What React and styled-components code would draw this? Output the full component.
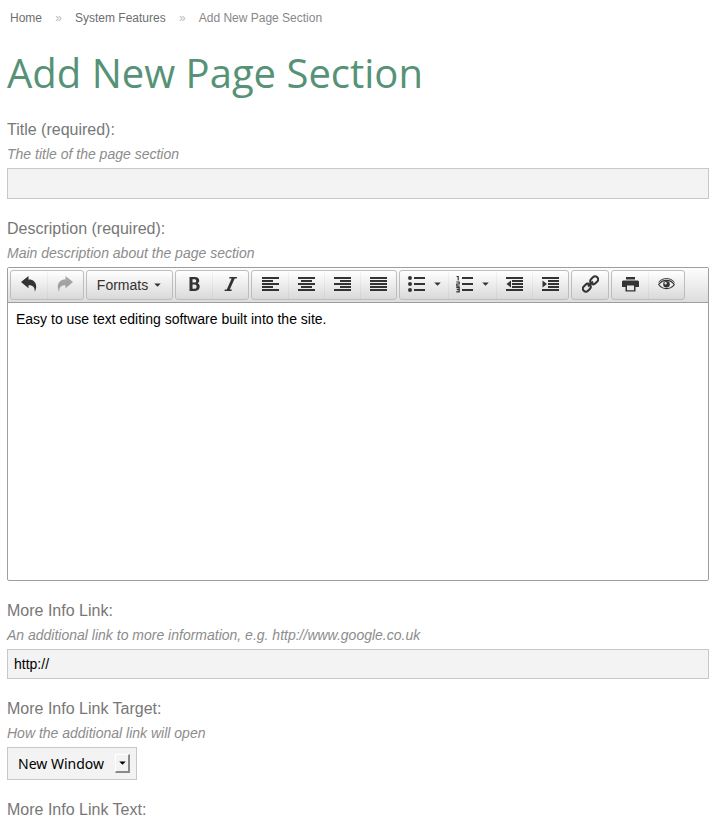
import React from 'react'
import styled, { createGlobalStyle } from 'styled-components'

const GlobalStyle = createGlobalStyle`
  * {
    box-sizing: border-box;
  }
  body {
    margin: 0;
    background: #fff;
    color: #777;
    font-family: "Liberation Sans", Arial, sans-serif;
  }
`;

const Page = styled.main`
  padding: 8px 6px 0 7px;
`;

const Breadcrumb = styled.nav`
  display: flex;
  padding: 0 3px;
  font-size: 12px;
  line-height: 20px;
  color: #888;
`;

const Crumb = styled.a`
  color: #6e6e6e;
  text-decoration: none;
`;

const Divider = styled.span`
  width: 33px;
  text-align: center;
  color: #bbb;
`;

const Heading = styled.h1`
  margin: 15px 0;
  font-family: "Open Sans", "Noto Sans", sans-serif;
  font-size: 40px;
  font-weight: 400;
  line-height: 60px;
  color: #559276;
`;

const Field = styled.div`
  margin-bottom: 18px;
`;

const Label = styled.label`
  display: block;
  font-size: 16px;
  line-height: 24px;
`;

const Hint = styled.p`
  margin: 0 0 1px;
  font-size: 14px;
  font-style: italic;
  line-height: 25px;
  color: #8c8c8c;
`;

const TextInput = styled.input`
  display: block;
  width: 100%;
  height: ${(props) => (props.$tall ? 31 : 30)}px;
  padding: 0 6px;
  border: 1px solid #c8c8c8;
  border-radius: 0;
  background: #f3f3f3;
  color: #000;
  font-family: inherit;
  font-size: 14px;
  outline: none;
`;

const SelectBox = styled.div`
  display: inline-flex;
  align-items: center;
  position: relative;
  vertical-align: top;
  border: 1px solid #c8c8c8;
  background: #f3f3f3;
`;

const Select = styled.select`
  appearance: none;
  width: 128px;
  height: 31px;
  padding: 0 24px 0 10px;
  border: 0;
  background: transparent;
  color: #000;
  font-family: "Noto Sans", "Open Sans", sans-serif;
  font-size: 14px;
  outline: none;
`;

const SelectArrow = styled.span`
  display: flex;
  align-items: center;
  justify-content: center;
  position: absolute;
  right: 6px;
  width: 15px;
  height: 19px;
  border: 1px solid #fff;
  border-right: 2px solid #8a8a8a;
  border-bottom: 2px solid #8a8a8a;
  background: #f3f3f3;
  color: #000;
  pointer-events: none;
`;

const Editor = styled.div`
  border: 1px solid #9e9e9e;
  border-radius: 2px;
  background: #fff;
`;

const Toolbar = styled.div`
  display: flex;
  flex-wrap: wrap;
  gap: 2px;
  padding: 2px;
  border-bottom: 1px solid #9e9e9e;
  background: linear-gradient(#fdfdfd, #dddddd);
`;

const Group = styled.div`
  display: flex;
  border: 1px solid #bdbdbd;
  border-radius: 3px;
  background: linear-gradient(#ffffff, #d9d9d9);
`;

const ToolButton = styled.button`
  display: flex;
  align-items: center;
  justify-content: center;
  gap: ${(props) => (props.$text ? 6 : 9)}px;
  width: ${(props) => props.$width || 36}px;
  height: 28px;
  padding: ${(props) => (props.$text ? '0 2px 0 0' : '0 0 2px')};
  border: 0;
  border-left: 1px solid ${(props) => (props.$first ? 'transparent' : 'rgba(0, 0, 0, 0.04)')};
  background: transparent;
  color: #333;
  font-family: inherit;
  font-size: 14px;
`;

const Glyph = styled.svg`
  display: block;
  flex: none;
  fill: currentColor;
  opacity: ${(props) => (props.$faded ? 0.4 : 1)};
`;

const Body = styled.textarea`
  display: block;
  width: 100%;
  height: 277px;
  padding: 8px;
  border: 0;
  background: transparent;
  color: #000;
  font-family: inherit;
  font-size: 14px;
  line-height: 16px;
  resize: none;
  outline: none;
`;

const icons = {
  undo: <path d="M0 7 7.500 1v3.500c6-.3 10 5 6.200 12.300.3-4.500-1.700-6.500-6.200-6.500v3z" />,
  redo: <path d="M16 7 8.500 1v3.500C2.500 4.200-1.500 9.500 2.300 16.800 2 12.300 4 10.300 8.500 10.300v3z" />,
  bold: <path fillRule="evenodd" d="M3.500 2h5.500c2.700 0 4.200 1.300 4.200 3.500 0 1.400-.7 2.300-1.700 2.800 1.400.5 2.200 1.600 2.200 3.300 0 2.800-1.700 4.400-4.700 4.400H3.500zM6.500 4.200v3.400h1.700c1.300 0 2-.6 2-1.700s-.7-1.700-2-1.700zm0 5.400v4.200h2c1.400 0 2.100-.7 2.100-2.100s-.7-2.100-2.100-2.100z" />,
  italic: <path d="M7.500 2H15l-.3 1.400h-2L7.800 14.600h2L9.500 16H2.500l.3-1.400h2L9.600 3.400H7.200z" />,
  left: <path d="M0 2h17v2H0zM0 5h11v2H0zM0 8h17v2H0zM0 11h11v2H0zM0 14h17v2H0z" />,
  center: <path d="M0 2h17v2H0zM3 5h11v2H3zM0 8h17v2H0zM3 11h11v2H3zM0 14h17v2H0z" />,
  right: <path d="M0 2h17v2H0zM6 5h11v2H6zM0 8h17v2H0zM6 11h11v2H6zM0 14h17v2H0z" />,
  justify: <path d="M0 2h17v2H0zM0 5h17v2H0zM0 8h17v2H0zM0 11h17v2H0zM0 14h17v2H0z" />,
  bullets: <path d="M6 2h11v2H6zM6 8h11v2H6zM6 14h11v2H6zM2 1a2 2 0 1 1 0 4 2 2 0 0 1 0-4zM2 7a2 2 0 1 1 0 4 2 2 0 0 1 0-4zM2 13a2 2 0 1 1 0 4 2 2 0 0 1 0-4z" />,
  numbers: (
    <>
      <path d="M6 2h11v2H6zM6 8h11v2H6zM6 14h11v2H6z" />
      <path fill="none" stroke="currentColor" strokeWidth="1.200" d="M.5 1.500h1.700V5.500M.3 7h2.900v2H.8v2.100h2.900M.3 12.700h2.900v4.100H.3M.8 14.700h2.400" />
    </>
  ),
  outdent: <path d="M0 2h17v2H0zM6 5h11v2H6zM6 8h11v2H6zM6 11h11v2H6zM0 14h17v2H0zM5 5.500v7L.5 9z" />,
  indent: <path d="M0 2h17v2H0zM6 5h11v2H6zM6 8h11v2H6zM6 11h11v2H6zM0 14h17v2H0zM.5 5.500v7L5 9z" />,
  link: (
    <g fill="none" stroke="currentColor" strokeWidth="2" transform="rotate(-45 8.500 9)">
      <rect x="-1" y="6" width="8.500" height="6" rx="3" />
      <rect x="9.500" y="6" width="8.500" height="6" rx="3" />
      <path d="M5 9h7" />
    </g>
  ),
  print: <path fillRule="evenodd" d="M4 2h9v2.500H4zM1 5.500h15l1 1V12h-3.500v4.500h-10V12H0V6.500zM5 10.500v4.700h7v-4.700z" />,
  preview: (
    <>
      <path fill="none" stroke="currentColor" strokeWidth="1.200" d="M.7 9.500C4.500 4 12.500 4 16.300 9.500 12.500 15 4.500 15 .7 9.500z" />
      <path fillRule="evenodd" d="M8.500 6a3.300 3.300 0 1 1 0 6.600 3.300 3.300 0 0 1 0-6.600zM7.600 7a1.200 1.200 0 1 0 0 2.400 1.200 1.200 0 0 0 0-2.400z" />
      <path fill="none" stroke="currentColor" d="M.5 7.300C4.500 2.300 12.500 2.300 16.500 7.300" />
    </>
  ),
};

const groups = [
  [{ icon: 'undo', title: 'Undo' }, { icon: 'redo', title: 'Redo', disabled: true }],
  [{ text: 'Formats', title: 'Formats', menu: true, width: 85 }],
  [{ icon: 'bold', title: 'Bold' }, { icon: 'italic', title: 'Italic' }],
  [
    { icon: 'left', title: 'Align left' },
    { icon: 'center', title: 'Align center' },
    { icon: 'right', title: 'Align right' },
    { icon: 'justify', title: 'Justify' },
  ],
  [
    { icon: 'bullets', title: 'Bullet list', menu: true, width: 48 },
    { icon: 'numbers', title: 'Numbered list', menu: true, width: 48 },
    { icon: 'outdent', title: 'Decrease indent' },
    { icon: 'indent', title: 'Increase indent' },
  ],
  [{ icon: 'link', title: 'Insert link' }],
  [{ icon: 'print', title: 'Print' }, { icon: 'preview', title: 'Preview' }],
];

const Caret = () => (
  <Glyph width="7" height="4" viewBox="0 0 7 4" aria-hidden="true">
    <path d="M.3.500h6.400L3.500 3.800z" />
  </Glyph>
)

const Tool = ({ item, first }) => (
  <ToolButton
    type="button"
    title={item.title}
    aria-label={item.title}
    disabled={item.disabled}
    $first={first}
    $text={item.text}
    $width={item.width}
  >
    {item.text}
    {item.icon && (
      <Glyph width="17" height="18" viewBox="0 0 17 18" $faded={item.disabled} aria-hidden="true">
        {icons[item.icon]}
      </Glyph>
    )}
    {item.menu && <Caret />}
  </ToolButton>
)

class App extends React.Component {

render() {
  return (
    <Page>
      <GlobalStyle />
      <Breadcrumb aria-label="Breadcrumb">
        <Crumb href="#home">Home</Crumb>
        <Divider>»</Divider>
        <Crumb href="#features">System Features</Crumb>
        <Divider>»</Divider>
        <span>Add New Page Section</span>
      </Breadcrumb>
      <Heading>Add New Page Section</Heading>
      <form>
        <Field>
          <Label htmlFor="title">Title (required):</Label>
          <Hint>The title of the page section</Hint>
          <TextInput id="title" type="text" $tall />
        </Field>
        <Field>
          <Label htmlFor="description">Description (required):</Label>
          <Hint>Main description about the page section</Hint>
          <Editor>
            <Toolbar role="toolbar">
              {groups.map((group, i) => (
                <Group key={i}>
                  {group.map((item, j) => <Tool key={item.title} item={item} first={j === 0} />)}
                </Group>
              ))}
            </Toolbar>
            <Body id="description" defaultValue="Easy to use text editing software built into the site." />
          </Editor>
        </Field>
        <Field>
          <Label htmlFor="link">More Info Link:</Label>
          <Hint>An additional link to more information, e.g. http://www.google.co.uk</Hint>
          <TextInput id="link" type="text" defaultValue="http://" />
        </Field>
        <Field>
          <Label htmlFor="target">More Info Link Target:</Label>
          <Hint>How the additional link will open</Hint>
          <SelectBox>
            <Select id="target" defaultValue="new">
              <option value="new">New Window</option>
              <option value="same">Same Window</option>
            </Select>
            <SelectArrow><Caret /></SelectArrow>
          </SelectBox>
        </Field>
        <Label as="div">More Info Link Text:</Label>
      </form>
    </Page>
    )
  }
}

export default App
